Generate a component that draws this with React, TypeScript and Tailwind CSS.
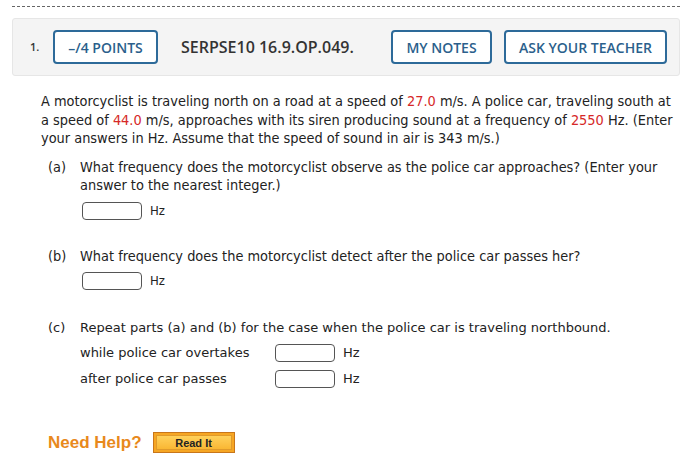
import React from 'react'

function HeaderButton({ label, className = '' }: { label: string; className?: string }) {
  return (
    <div
      className={`flex items-center justify-center h-[34px] rounded-[4px] border-2 border-[#2d6a99] bg-white text-[#2b5f8c] text-[14px] font-semibold ${className}`}
    >
      {label}
    </div>
  )
}

function AnswerBox({ className = '' }: { className?: string }) {
  return <div className={`w-[60px] h-[18px] rounded-[4px] border border-[#555] bg-white ${className}`} />
}

const body = { fontFamily: '"DejaVu Sans Condensed", "DejaVu Sans", Verdana, sans-serif' }
const verdana = { fontFamily: '"DejaVu Sans", Verdana, sans-serif' }

export default function App() {
  return (
    <div className="w-[700px] h-[466px] bg-white text-[#222] overflow-hidden">
      <div className="pt-[6px] px-[12px] pr-[20px]">
        <div className="border-t border-dashed border-[#666]" />

        {/* Header */}
        <div
          className="mt-[11px] h-[58px] flex items-center bg-[#f4f4f4] border border-[#e6e6e6] rounded-[3px] pl-[17px] pr-[12px]"
          style={{ fontFamily: '"Open Sans", sans-serif' }}
        >
          <span className="text-[11px] font-semibold text-[#333] w-[23px]">1.</span>
          <HeaderButton label="–/4 POINTS" className="w-[105px]" />
          <span className="ml-[23px] text-[16px] font-semibold text-[#333]">SERPSE10 16.9.OP.049.</span>
          <div className="flex-1" />
          <HeaderButton label="MY NOTES" className="w-[101px]" />
          <HeaderButton label="ASK YOUR TEACHER" className="w-[163px] ml-[12px]" />
        </div>
      </div>

      <div className="pl-[41px] pr-[20px]">
        <p className="mt-[16px] text-[14.4px] leading-[18.5px]" style={body}>
          A motorcyclist is traveling north on a road at a speed of <span className="text-[#d62828]">27.0</span> m/s. A police car, traveling south at a speed of <span className="text-[#d62828]">44.0</span> m/s, approaches with its siren producing sound at a frequency of <span className="text-[#d62828]">2550</span> Hz. (Enter your answers in Hz. Assume that the speed of sound in air is 343 m/s.)
        </p>

        {/* (a) */}
        <div className="mt-[10px] ml-[7px] flex text-[14.4px] leading-[18.5px]" style={body}>
          <span className="w-[32px] shrink-0">(a)</span>
          <div>
            <p>What frequency does the motorcyclist observe as the police car approaches? (Enter your answer to the nearest integer.)</p>
            <div className="mt-[7px] flex items-center gap-[8px] ml-[2px]">
              <AnswerBox />
              <span className="text-[13px]">Hz</span>
            </div>
          </div>
        </div>

        {/* (b) */}
        <div className="mt-[27px] ml-[7px] flex text-[14.4px] leading-[18.5px]" style={body}>
          <span className="w-[32px] shrink-0">(b)</span>
          <div>
            <p>What frequency does the motorcyclist detect after the police car passes her?</p>
            <div className="mt-[6px] flex items-center gap-[8px] ml-[2px]">
              <AnswerBox />
              <span className="text-[13px]">Hz</span>
            </div>
          </div>
        </div>

        {/* (c) */}
        <div className="mt-[29px] ml-[7px] flex text-[13px] leading-[18px]" style={verdana}>
          <span className="w-[32px] shrink-0">(c)</span>
          <div>
            <p>Repeat parts (a) and (b) for the case when the police car is traveling northbound.</p>
            <div className="mt-[7px] flex items-center">
              <span className="w-[195px]">while police car overtakes</span>
              <AnswerBox />
              <span className="ml-[8px]">Hz</span>
            </div>
            <div className="mt-[8px] flex items-center">
              <span className="w-[195px]">after police car passes</span>
              <AnswerBox />
              <span className="ml-[8px]">Hz</span>
            </div>
          </div>
        </div>

        {/* Need help */}
        <div className="mt-[42px] ml-[7px] flex items-center" style={{ fontFamily: '"Liberation Sans", Arial, sans-serif' }}>
          <span className="text-[17px] font-bold text-[#e8891c]">Need Help?</span>
          <div className="ml-[11px] w-[82px] h-[21px] border border-[#c8761a] bg-[#f6a623] p-[2px]">
            <div className="w-full h-full bg-gradient-to-b from-[#ffd15a] to-[#f9b733] border border-[#e09a2b] flex items-center justify-center text-[11px] font-bold text-[#222]">
              Read It
            </div>
          </div>
        </div>
      </div>
    </div>
  )
}
